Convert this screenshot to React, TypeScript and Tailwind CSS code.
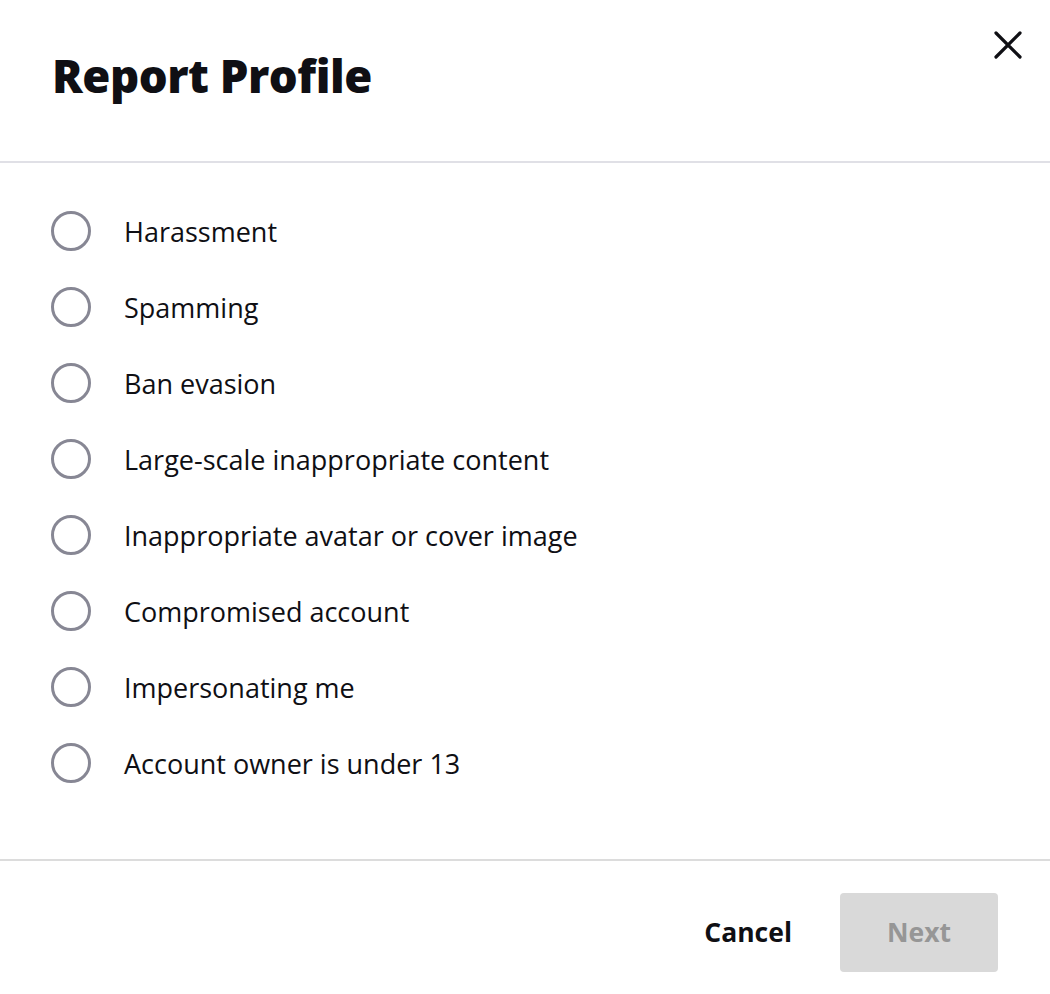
import { useState } from 'react'

const reasons = [
  'Harassment',
  'Spamming',
  'Ban evasion',
  'Large-scale inappropriate content',
  'Inappropriate avatar or cover image',
  'Compromised account',
  'Impersonating me',
  'Account owner is under 13',
]

export default function App() {
  const [selected, setSelected] = useState<number | null>(null)

  return (
    <div className="min-h-screen w-full bg-white text-[#0f0f14]" style={{ fontFamily: '"Open Sans", "Noto Sans", sans-serif' }}>
      {/* Header */}
      <div className="relative h-[163px] border-b-2 border-[#e0e0e6] pl-[52px] pt-[45px]">
        <h1 className="text-[45.5px] font-extrabold leading-[60px] tracking-[-0.5px]">Report Profile</h1>
        <button className="absolute right-[26px] top-[29px] flex h-[32px] w-[32px] items-center justify-center" aria-label="Close">
          <svg width="30" height="30" viewBox="0 0 30 30" fill="none" stroke="#0f0f14" strokeWidth="3.2" strokeLinecap="round">
            <path d="M3 3 L27 27 M27 3 L3 27" />
          </svg>
        </button>
      </div>

      {/* Options */}
      <div className="flex flex-col pb-[58px] pt-[30px]">
        {reasons.map((r, i) => (
          <label key={r} className="flex h-[76px] cursor-pointer items-center pl-[51px]" onClick={() => setSelected(i)}>
            <span className="flex h-[40px] w-[40px] items-center justify-center rounded-full border-[3px] border-[#878794]">
              {selected === i && <span className="h-[20px] w-[20px] rounded-full bg-[#6001d2]" />}
            </span>
            <span className="ml-[33px] text-[27px] leading-none">{r}</span>
          </label>
        ))}
      </div>

      {/* Footer */}
      <div className="flex items-center justify-end gap-[48px] border-t-2 border-[#dcdcdc] pr-[52px] pt-[32px]">
        <button className="text-[26.5px] font-bold">Cancel</button>
        <button className="h-[79px] w-[158px] rounded-[4px] bg-[#d9d9d9] text-[26.5px] font-bold text-[#969696]" disabled>
          Next
        </button>
      </div>
    </div>
  )
}
